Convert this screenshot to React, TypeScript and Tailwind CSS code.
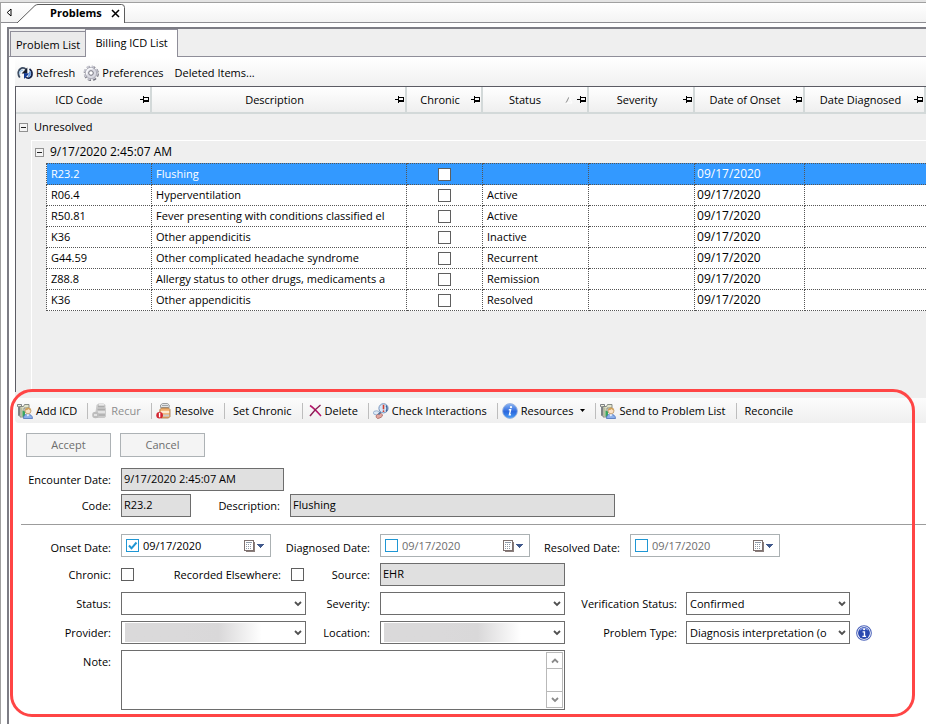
// src/pages/ProblemsPage.tsx
import { useState } from "react";
import type { ReactNode } from "react";
import clsx from "clsx";

type Problem = { code: string; description: string; status: string; onset: string };

const PROBLEMS: Problem[] = [
  { code: "R23.2", description: "Flushing", status: "", onset: "09/17/2020" },
  { code: "R06.4", description: "Hyperventilation", status: "Active", onset: "09/17/2020" },
  { code: "R50.81", description: "Fever presenting with conditions classified el", status: "Active", onset: "09/17/2020" },
  { code: "K36", description: "Other appendicitis", status: "Inactive", onset: "09/17/2020" },
  { code: "G44.59", description: "Other complicated headache syndrome", status: "Recurrent", onset: "09/17/2020" },
  { code: "Z88.8", description: "Allergy status to other drugs, medicaments a", status: "Remission", onset: "09/17/2020" },
  { code: "K36", description: "Other appendicitis", status: "Resolved", onset: "09/17/2020" },
];

const COLUMNS = ["ICD Code", "Description", "Chronic", "Status", "Severity", "Date of Onset", "Date Diagnosed"];

/* ---------- icons ---------- */

function PinIcon() {
  return (
    <svg width="10" height="9" viewBox="0 0 10 9" className="shrink-0" shapeRendering="crispEdges">
      <path d="M0 4h3v1H0zM3 1h1v7H3zM4 2h5v1H4zM4 5h5v2H4zM8 2h1v5H8z" fill="#000" />
    </svg>
  );
}

function RefreshIcon() {
  return (
    <svg width="16" height="16" viewBox="0 0 16 16" className="shrink-0">
      <path d="M2.800 12.500C.3 9 1 4.500 4.500 3.200c1.800-.6 3.500.1 4.700 1.600" fill="none" stroke="#3b4a60" strokeWidth="1.800" />
      <path d="M2.600 9C2.500 6.500 4 4.800 6.300 5.200" fill="none" stroke="#a4c8e8" strokeWidth="1.500" />
      <path d="M10.300 2.500v6H4.600z" fill="#141c2e" />
      <path d="M12.500 4c3.500 2.500 3.300 7.500-.2 9-1.500.5-2.800 0-3.800-1" fill="none" stroke="#16234a" strokeWidth="1.700" />
      <path d="M12.500 6.500c1.200 2 .5 4.500-1.600 5" fill="none" stroke="#5f95e0" strokeWidth="1.700" />
      <path d="M7 14V8l5.300.4z" fill="#123a94" />
    </svg>
  );
}

function GearIcon() {
  return (
    <svg width="16" height="16" viewBox="0 0 16 16" className="shrink-0">
      <circle cx="8.300" cy="8.400" r="6.300" fill="none" stroke="#6d6d78" strokeWidth="2.600" strokeDasharray="3 1.950" />
      <circle cx="7.800" cy="7.800" r="6.300" fill="none" stroke="#c9c9d2" strokeWidth="2" strokeDasharray="3 1.950" />
      <circle cx="8" cy="8" r="5.600" fill="#dadae2" stroke="#a4a4b0" strokeWidth=".8" />
      <path d="M3.800 9.500A4.500 4.500 0 0 1 9.500 3.800" stroke="#f8f8fb" strokeWidth="1.500" fill="none" />
      <circle cx="8" cy="8" r="2.300" fill="#fff" stroke="#74747f" />
    </svg>
  );
}

function PatientFilesIcon() {
  return (
    <svg width="16" height="16" viewBox="0 0 16 16" className="shrink-0">
      <path d="M.5 1.500h4v2h-2v9h-1v-9h-1z" fill="#f0eedc" stroke="#70767a" strokeWidth=".9" />
      <path d="M3 3.500h3.500l1-2H12v3.500H7v9H3z" fill="#e3e5cb" stroke="#7b807c" strokeWidth=".9" />
      <path d="M4.800 4.500v9" stroke="#a5b08c" />
      <path d="M5.500 7.500v6l2.500.8V8.500z" fill="#37a560" />
      <path d="M6.500 15.500c0-3 1.300-4.300 4-4.300s5 1.300 5 4.300z" fill="#8db1ec" stroke="#4a70b8" strokeWidth=".8" />
      <path d="m9.300 11.200 1.600 2.300 1.600-2.300z" fill="#fff" />
      <circle cx="11" cy="7.800" r="3" fill="#fbe2c6" stroke="#b08a55" strokeWidth=".7" />
      <path d="M8 7.500c0-3.800 6-3.800 6 0-1.500-.2-2-1.200-2.500-1.500C10.500 7 9.500 7.300 8 7.500z" fill="#d0a258" />
    </svg>
  );
}

function RecurIcon() {
  return (
    <svg width="16" height="16" viewBox="0 0 16 16" className="shrink-0">
      <path d="M4.500 2 6.500.5h5L13.500 2v2.500l.5 1v8L12.500 15H5L3.500 9z" fill="#cacaca" />
      <path d="M6 3.500h6.500M5.500 6.500h7.500M6.500 12h6.500" stroke="#adadad" strokeWidth="1.300" />
      <path d="M7 1.800h5M6 9h7" stroke="#eaeaea" strokeWidth="1.400" />
      <circle cx="3.500" cy="12" r="3.300" fill="#bdbdbd" />
      <path d="M2 12h3" stroke="#f0f0f0" strokeWidth="1.500" />
    </svg>
  );
}

function ResolveIcon() {
  return (
    <svg width="16" height="16" viewBox="0 0 16 16" className="shrink-0">
      <path d="M4.500 2 6.500.5h5l1.700 1.500v2.500H4.500z" fill="#e3e5e7" stroke="#85898c" strokeWidth=".8" />
      <path d="M6 2.500h6" stroke="#a2a6aa" />
      <path d="M4 6.500 5.500 5h7L14 6.500v7L12.500 15H5L3.500 10z" fill="#efae6c" stroke="#a1713f" strokeWidth=".8" />
      <path d="M5 7.800h8.200v2.400H5z" fill="#fde9d0" />
      <path d="M7 12.500h6.200" stroke="#c9cbce" strokeWidth="2" />
      <circle cx="3.600" cy="12.200" r="3.300" fill="#d32732" />
      <path d="M3.600 9.800v4.500" stroke="#fff" strokeWidth="1.400" />
    </svg>
  );
}

function DeleteIcon() {
  return (
    <svg width="13" height="13" viewBox="0 0 13 13" className="shrink-0">
      <path d="M1 1.500c4 2.500 7 6 11 10.500" stroke="#b5176b" strokeWidth="1.500" fill="none" />
      <path d="M11.500 1C7.500 4 4 8 1 12" stroke="#8c1d55" strokeWidth="1.500" fill="none" />
    </svg>
  );
}

function InteractionsIcon() {
  return (
    <svg width="16" height="16" viewBox="0 0 16 16" className="shrink-0">
      <ellipse cx="3.500" cy="9.800" rx="3.200" ry="2" fill="#dce9f6" stroke="#86a3c8" strokeWidth=".8" />
      <rect x="3" y="11" width="6.500" height="4" rx="2" transform="rotate(-25 6 13)" fill="#e4a79f" stroke="#a3625c" strokeWidth=".7" />
      <path d="m8 8.500-2.500 3" stroke="#58769f" strokeWidth="1.800" />
      <circle cx="10.500" cy="5.300" r="4.600" fill="#d5e6f9" stroke="#7593bd" strokeWidth="1" />
      <path d="M10.500 1.800v4.500" stroke="#cf4030" strokeWidth="1.600" />
      <circle cx="10.500" cy="8.200" r=".9" fill="#cf4030" />
      <path d="M13 2.500c1.300 1.500 1.300 4.500 0 6" stroke="#3d6298" strokeWidth="1.300" fill="none" />
    </svg>
  );
}

function ResourcesIcon() {
  return (
    <svg width="16" height="16" viewBox="0 0 16 16" className="shrink-0">
      <defs>
        <linearGradient id="res" x1="0" y1="0" x2="0" y2="1">
          <stop offset="0" stopColor="#8bb5f4" />
          <stop offset=".55" stopColor="#2a67dd" />
          <stop offset="1" stopColor="#4aa0f7" />
        </linearGradient>
      </defs>
      <circle cx="8" cy="8" r="7.400" fill="url(#res)" stroke="#9ab2de" strokeWidth=".9" />
      <path d="M6.800 6.800h1.800l-1.200 5h1.500" stroke="#fff" strokeWidth="1.400" fill="none" />
      <circle cx="9" cy="4.200" r="1.100" fill="#fff" />
    </svg>
  );
}

function InfoIcon() {
  return (
    <svg width="16" height="16" viewBox="0 0 17 17">
      <circle cx="8.500" cy="8.500" r="7.800" fill="#fff" stroke="#4a62ba" strokeWidth="1.100" />
      <circle cx="8.500" cy="8.500" r="6.300" fill="#2a49b0" />
      <path d="M4 5.500a6 6 0 0 1 9 0" stroke="#7e94dd" strokeWidth="1.400" fill="none" />
      <path d="M7 7.300h2v4.500M6.800 12h3.900" stroke="#fff" strokeWidth="1.400" fill="none" />
      <circle cx="8.600" cy="4.600" r="1.100" fill="#fff" />
    </svg>
  );
}

function CalendarIcon() {
  return (
    <svg width="20" height="12" viewBox="0 0 20 12" shapeRendering="crispEdges">
      <path d="M2 2h9v10H2z" fill="#8b7f7c" />
      <path d="M0 0h10v11H0z" fill="#7d706e" />
      <path d="M1 1h8v9H1z" fill="#fff" />
      <path d="M2 2h6v1H2zM2 4h1v1H2zM4 4h1v1H4zM6 4h1v1H6zM2 6h1v1H2zM4 6h1v1H4zM6 6h1v1H6zM2 8h1v1H2zM4 8h1v1H4zM6 8h1v1H6z" fill="#8f9aa8" />
      <path d="M13 4h7v1h-7zM14 5h5v1h-5zM15 6h3v1h-3zM16 7h1v1h-1z" fill="#41598c" />
    </svg>
  );
}

function Chevron({ up }: { up?: boolean }) {
  return (
    <svg width="8" height="6" viewBox="0 0 8 6">
      <path d={up ? "M1 4.500 4 1.500l3 3" : "M1 1l3 3 3-3"} fill="none" stroke="currentColor" strokeWidth="1.800" />
    </svg>
  );
}

/* ---------- small building blocks ---------- */

function ToolButton({ icon, disabled, children }: { icon?: ReactNode; disabled?: boolean; children: ReactNode }) {
  return (
    <button
      type="button"
      disabled={disabled}
      className={clsx("flex items-center gap-[3px] whitespace-nowrap", disabled ? "text-[#8d8d8d]" : "text-black")}
    >
      {icon}
      {children}
    </button>
  );
}

function Separator() {
  return <span className="h-4 w-px shrink-0 bg-[#bdbdbd]" />;
}

function Label({ htmlFor, className, children }: { htmlFor: string; className: string; children: ReactNode }) {
  return (
    <label htmlFor={htmlFor} className={clsx("shrink-0 text-right whitespace-nowrap", className)}>
      {children}
    </label>
  );
}

function ReadOnly({ id, value, className }: { id: string; value: string; className: string }) {
  return (
    <input
      id={id}
      readOnly
      defaultValue={value}
      className={clsx("h-[23px] shrink-0 border border-[#6d6d6d] bg-[#e0e0e0] px-0.5 pb-0.5 outline-none", className)}
    />
  );
}

function CheckBox({ id, label }: { id?: string; label?: string }) {
  return (
    <input
      id={id}
      aria-label={label}
      type="checkbox"
      className="block size-[13px] shrink-0 appearance-none border border-[#5f5f5f] bg-white checked:bg-[#5f5f5f]"
    />
  );
}

function DateField({ id, enabled }: { id: string; enabled?: boolean }) {
  const [on, setOn] = useState(!!enabled);
  return (
    <div className="flex h-[23px] w-[150px] shrink-0 items-center border border-[#abb1b3] bg-white pr-1.5 pl-1">
      <span className="relative size-[13px] shrink-0">
        <input
          type="checkbox"
          aria-label={`Use ${id}`}
          checked={on}
          onChange={(e) => setOn(e.target.checked)}
          className="block size-[13px] appearance-none border border-[#1f97d4] bg-white"
        />
        {on && (
          <svg width="13" height="13" viewBox="0 0 13 13" className="pointer-events-none absolute inset-0">
            <path d="m3 6.500 2.500 2.800L10.500 3.500" fill="none" stroke="#1f97d4" strokeWidth="2" />
          </svg>
        )}
      </span>
      <input
        id={id}
        defaultValue="09/17/2020"
        className={clsx("min-w-0 flex-1 bg-transparent pl-1 outline-none", on ? "text-black" : "text-[#6d6d6d]")}
      />
      <button type="button" aria-label="Open calendar">
        <CalendarIcon />
      </button>
    </div>
  );
}

function Select({ id, value, masked, className }: { id: string; value?: string; masked?: boolean; className: string }) {
  return (
    <div className={clsx("relative h-[23px] shrink-0", className)}>
      <select
        id={id}
        defaultValue={value ?? ""}
        className="block size-full appearance-none overflow-hidden border border-[#6d6d6d] bg-white pr-5 pl-[3px] text-black outline-none"
      >
        <option>{value ?? ""}</option>
      </select>
      {masked && (
        <span className="pointer-events-none absolute inset-y-0.5 left-1 w-36 bg-linear-to-r from-[#dad9da] from-40% via-[#d9d8d9] via-65% to-white to-95%" />
      )}
      <span className="pointer-events-none absolute top-[9px] right-1 text-[#505050]">
        <Chevron />
      </span>
    </div>
  );
}

function Expander() {
  return (
    <button type="button" aria-label="Collapse group" className="flex size-[9px] shrink-0 items-center justify-center border border-[#919191] bg-[#f4f4f4]">
      <span className="h-px w-[5px] bg-[#222]" />
    </button>
  );
}

/* ---------- grid ---------- */

function ProblemGrid() {
  const [selected, setSelected] = useState(0);
  const cell = "border-r border-b border-dotted border-[#555] p-0 last:border-r-0";

  return (
    <div className="ml-1.5 border-t border-l border-[#5c5c64] bg-[#efefef]">
      <table className="w-full table-fixed border-separate border-spacing-0">
        <colgroup>
          <col className="w-[15px]" />
          <col className="w-4" />
          <col className="w-[105px]" />
          <col className="w-[255px]" />
          <col className="w-[76px]" />
          <col className="w-[106px]" />
          <col className="w-[106px]" />
          <col className="w-[110px]" />
          <col />
        </colgroup>
        <thead>
          <tr>
            {COLUMNS.map((name, i) => (
              <th
                key={name}
                colSpan={i === 0 ? 3 : 1}
                className="h-[27px] border-r-2 border-b-2 border-[#d3d9d9] bg-linear-to-b from-white to-[#efefef] p-0 font-normal"
              >
                <div className="flex items-center pl-0.5">
                  <span className="flex-1 text-center whitespace-nowrap">{name}</span>
                  {name === "Status" && (
                    <svg width="8" height="8" viewBox="0 0 8 8" className="mr-1 shrink-0">
                      <path d="M1 7 4 1" stroke="#8c8c8c" fill="none" />
                      <path d="m4 1 3 6H1" stroke="#fff" fill="none" />
                    </svg>
                  )}
                  <PinIcon />
                </div>
              </th>
            ))}
          </tr>
        </thead>
        <tbody>
          <tr>
            <td colSpan={9} className="h-[26px] p-0">
              <div className="flex items-center gap-1.5 pl-[3px]">
                <Expander /> Unresolved
              </div>
            </td>
          </tr>
          <tr>
            <td className="p-0" />
            <td colSpan={8} className="h-[23px] border-t border-l border-white p-0 text-xs leading-4">
              <div className="flex items-center gap-1.5 pl-[3px]">
                <Expander /> 9/17/2020 2:45:07 AM
              </div>
            </td>
          </tr>
          {PROBLEMS.map((p, i) => {
            const first = i === 0 && "border-t";
            return (
              <tr key={i} onClick={() => setSelected(i)}>
                <td className="p-0" />
                <td className="border-r border-l border-r-[#555] border-l-white p-0 [border-right-style:dotted]" />
                {[p.code, p.description, null, p.status, "", p.onset, ""].map((text, c) => (
                  <td
                    key={c}
                    className={clsx(
                      cell,
                      first,
                      i === 0 ? "h-[22px]" : "h-[21px]",
                      selected === i ? "bg-[#3399ff] text-white" : "bg-white"
                    )}
                  >
                    {text === null ? (
                      <div className="flex justify-center">
                        <CheckBox label={`Chronic ${p.code}`} />
                      </div>
                    ) : (
                      <div
                        className={clsx(
                          "overflow-hidden whitespace-nowrap",
                          c === 5 ? "pl-0.5 text-xs leading-4" : "pl-1"
                        )}
                      >
                        {text}
                      </div>
                    )}
                  </td>
                ))}
              </tr>
            );
          })}
          <tr>
            <td className="h-[81px] p-0" />
            <td colSpan={8} className="border-l border-white p-0" />
          </tr>
        </tbody>
      </table>
    </div>
  );
}

/* ---------- detail form ---------- */

function ProblemDetail() {
  return (
    <section className="relative flex-1">
      <div className="ml-1.5 h-1.5 bg-[#efefef]" />
      <div className="ml-1.5 flex h-[25px] items-center gap-2.5 rounded-l bg-linear-to-b from-[#fcfcfc] to-[#efefef] pl-0.5">
        <ToolButton icon={<PatientFilesIcon />}>Add ICD</ToolButton>
        <div className="flex items-center gap-1">
          <Separator />
          <ToolButton icon={<RecurIcon />} disabled>Recur</ToolButton>
        </div>
        <div className="flex items-center gap-1">
          <Separator />
          <ToolButton icon={<ResolveIcon />}>Resolve</ToolButton>
        </div>
        <div className="flex items-center gap-2">
          <Separator />
          <ToolButton>Set Chronic</ToolButton>
        </div>
        <div className="flex items-center gap-1.5">
          <Separator />
          <ToolButton icon={<DeleteIcon />}>Delete</ToolButton>
        </div>
        <div className="flex items-center gap-1">
          <Separator />
          <ToolButton icon={<InteractionsIcon />}>Check Interactions</ToolButton>
        </div>
        <div className="flex items-center gap-1">
          <Separator />
          <ToolButton icon={<ResourcesIcon />}>
            Resources
            <svg width="5" height="3" viewBox="0 0 5 3" className="ml-1">
              <path d="M0 0h5L2.500 3z" fill="#000" />
            </svg>
          </ToolButton>
        </div>
        <div className="flex items-center gap-1">
          <Separator />
          <ToolButton icon={<PatientFilesIcon />}>Send to Problem List</ToolButton>
        </div>
        <div className="flex items-center gap-2">
          <Separator />
          <ToolButton>Reconcile</ToolButton>
        </div>
      </div>

      <form className="pb-3.5 pl-1.5" onSubmit={(e) => e.preventDefault()}>
        <div className="flex gap-[9px] pt-2.5 pl-[11px]">
          <button type="button" disabled className="h-6 w-[85px] border border-[#adb2b5] bg-[#f4f4f4] text-[#6d6d6d]">Accept</button>
          <button type="button" disabled className="h-6 w-[85px] border border-[#adb2b5] bg-[#f4f4f4] text-[#6d6d6d]">Cancel</button>
        </div>

        <div className="flex items-center pt-[11px]">
          <Label htmlFor="encounter" className="mr-2.5 w-24">Encounter Date:</Label>
          <ReadOnly id="encounter" value="9/17/2020 2:45:07 AM" className="w-[163px]" />
        </div>
        <div className="flex items-center pt-[3px]">
          <Label htmlFor="code" className="mr-2.5 w-24">Code:</Label>
          <ReadOnly id="code" value="R23.2" className="w-[70px]" />
          <Label htmlFor="description" className="mr-2.5 w-[89px]">Description:</Label>
          <ReadOnly id="description" value="Flushing" className="w-[325px]" />
        </div>

        <hr className="mt-[7px] mb-[9px] ml-1.5 border-t border-[#9c9c9c]" />

        <div className="flex flex-col gap-1.5">
          <div className="flex items-center">
            <Label htmlFor="onset" className="mr-2.5 w-24 pt-1">Onset Date:</Label>
            <DateField id="onset" enabled />
            <Label htmlFor="diagnosed" className="mr-2.5 w-[99px] pt-1">Diagnosed Date:</Label>
            <DateField id="diagnosed" />
            <Label htmlFor="resolved" className="mr-2.5 w-[90px] pt-1">Resolved Date:</Label>
            <DateField id="resolved" />
          </div>
          <div className="flex items-center">
            <Label htmlFor="chronic" className="mr-2.5 w-24">Chronic:</Label>
            <CheckBox id="chronic" />
            <Label htmlFor="elsewhere" className="mr-2.5 w-[147px]">Recorded Elsewhere:</Label>
            <CheckBox id="elsewhere" />
            <Label htmlFor="source" className="mr-2.5 w-[66px]">Source:</Label>
            <ReadOnly id="source" value="EHR" className="w-[185px]" />
          </div>
          <div className="flex items-center">
            <Label htmlFor="status" className="mr-2.5 w-24">Status:</Label>
            <Select id="status" className="w-[185px]" />
            <Label htmlFor="severity" className="mr-2.5 w-16">Severity:</Label>
            <Select id="severity" className="w-[185px]" />
            <Label htmlFor="verification" className="mr-[9px] w-28">Verification Status:</Label>
            <Select id="verification" value="Confirmed" className="w-[164px]" />
          </div>
          <div className="flex items-center">
            <Label htmlFor="provider" className="mr-2.5 w-24">Provider:</Label>
            <Select id="provider" masked className="w-[185px]" />
            <Label htmlFor="location" className="mr-2.5 w-16">Location:</Label>
            <Select id="location" masked className="w-[185px]" />
            <Label htmlFor="type" className="mr-[9px] w-28">Problem Type:</Label>
            <Select id="type" value="Diagnosis interpretation (o" className="w-[164px]" />
            <button type="button" aria-label="Problem type help" className="ml-1.5">
              <InfoIcon />
            </button>
          </div>
          <div className="flex">
            <Label htmlFor="note" className="mr-2.5 w-24 pt-1">Note:</Label>
            <div className="flex h-[60px] w-[444px] shrink-0 border border-[#6d6d6d] bg-white p-px">
              <textarea id="note" className="min-w-0 flex-1 resize-none outline-none" />
              <div className="flex w-[17px] flex-col border border-[#b9b9b9] text-[#8a8a8a]">
                <button type="button" aria-label="Scroll up" className="flex h-4 items-center justify-center border-b border-[#b9b9b9]">
                  <Chevron up />
                </button>
                <span className="flex-1" />
                <button type="button" aria-label="Scroll down" className="flex h-4 items-center justify-center border-t border-[#b9b9b9]">
                  <Chevron />
                </button>
              </div>
            </div>
          </div>
        </div>
      </form>

      {/* callout around the editing area */}
      <div className="pointer-events-none absolute -top-[3px] right-[11px] bottom-[7px] left-px rounded-[22px] border-3 border-[#ff4545]" />
    </section>
  );
}

export default function App() {
  return (
    <div className="flex min-h-screen w-full flex-col overflow-hidden bg-[#e3e3e3] pt-0.5 font-['Open_Sans','Noto_Sans',sans-serif] text-[11px] leading-4 text-black">
      <div className="flex flex-1 flex-col border-t border-l border-[#a0a0a0] bg-white">
        <div className="flex h-5 items-stretch border-b border-[#8d8d92] bg-linear-to-b from-white to-[#f3f3f3]">
          <button type="button" aria-label="Previous tab" className="w-4 pl-[5px]">
            <svg width="6" height="9" viewBox="0 0 6 9">
              <path d="M5 1v7L1.200 4.500z" fill="#fff" stroke="#000" />
            </svg>
          </button>
          <div className="relative -mb-px w-[109px]">
            <svg width="109" height="20" viewBox="0 0 109 20" className="absolute inset-0">
              <path d="M0 20 18 2.500Q19.500 1.500 21 1.500h83.500q3 0 3 3V20z" fill="#fff" />
              <path d="M0 20 18 2.500Q19.500 1.500 21 1.500h83.500q3 0 3 3V20" fill="none" stroke="#5c5c5c" />
            </svg>
            <div className="relative flex items-center pt-0.5 pl-[33px]">
              <span className="flex-1 font-bold">Problems</span>
              <button type="button" aria-label="Close Problems" className="mr-1.5">
                <svg width="9" height="9" viewBox="0 0 9 9">
                  <path d="m1 1 7 7M8 1 1 8" stroke="#000" strokeWidth="1.500" />
                </svg>
              </button>
            </div>
          </div>
        </div>

        <div className="mt-1 ml-1.5 flex flex-1 flex-col border-t-2 border-l-2 border-[#7c7c84]">
          <div className="flex h-7 items-end border-b border-[#8f8e99] bg-[#efefef] pl-px">
            <button type="button" className="h-[25px] border-t border-l border-[#8f8e99] bg-[#ebebeb] px-[5px] pt-0.5 whitespace-nowrap">
              Problem List
            </button>
            <button type="button" className="-mb-px h-7 w-[93px] border-x border-t border-[#8f8e99] bg-white pb-0.5 whitespace-nowrap">
              Billing ICD List
            </button>
          </div>

          <div className="ml-1.5 flex h-[29px] items-center bg-linear-to-b from-white to-[#f1f1f1] pt-0.5 pl-0.5">
            <ToolButton icon={<RefreshIcon />}>Refresh</ToolButton>
            <span className="w-2" />
            <ToolButton icon={<GearIcon />}>Preferences</ToolButton>
            <span className="w-[11px]" />
            <ToolButton>Deleted Items...</ToolButton>
          </div>

          <ProblemGrid />
          <ProblemDetail />
        </div>
      </div>
    </div>
  );
}
